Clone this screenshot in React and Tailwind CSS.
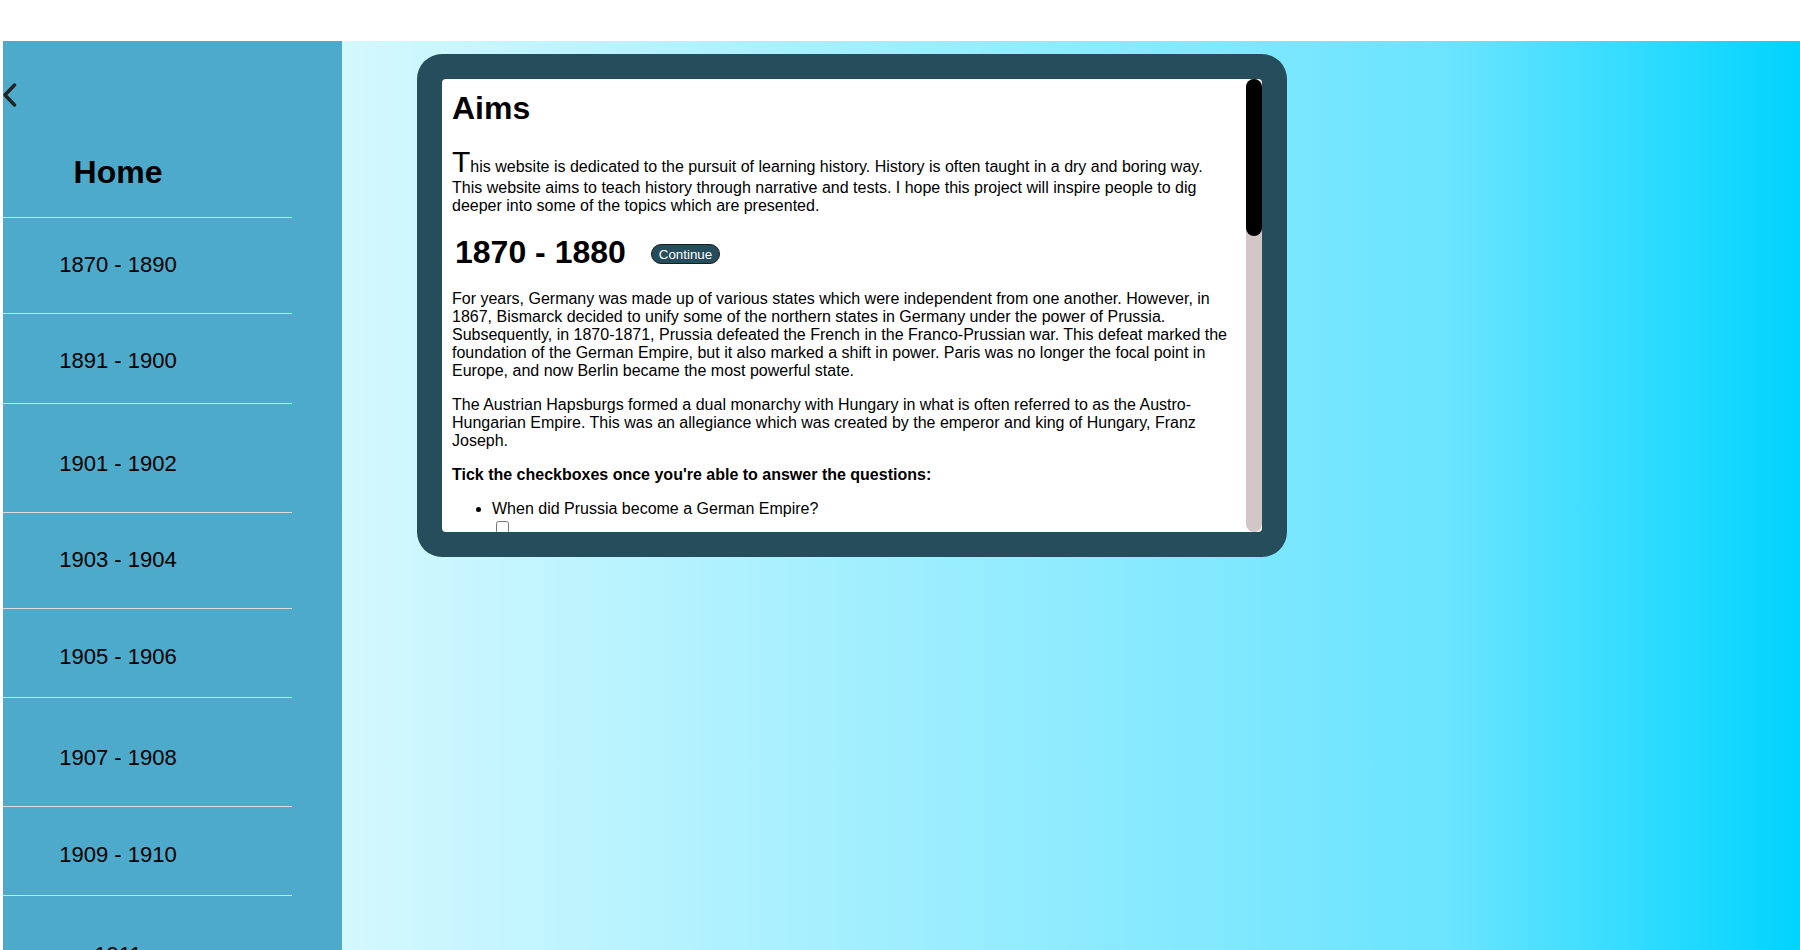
import React from 'react';

// sidebar entries, heights include the divider line under each one
const periods = [
    { label: '1870 - 1890', h: 'h-[96px] pb-[2px]' },
    { label: '1891 - 1900', h: 'h-[90px] pt-[5px]' },
    { label: '1901 - 1902', h: 'h-[109px] pt-[11px]' },
    { label: '1903 - 1904', h: 'h-[96px] pb-[2px]' },
    { label: '1905 - 1906', h: 'h-[89px] pt-[7px]' },
    { label: '1907 - 1908', h: 'h-[109px] pt-[11px]' },
    { label: '1909 - 1910', h: 'h-[89px] pt-[7px]' },
    { label: '1911', h: 'h-[118px]' },
];

const questions1870 = [
    'When did Prussia become a German Empire?',
    'Who decided to unify the northern states of Germany?',
    'Which war did Prussia win in 1870-1871?',
    'Which city became the most powerful state in Europe?',
    'What is the dual monarchy of Austria and Hungary often referred to as?',
];

const questions1881 = [
    'Which countries signed the Triple Alliance?',
    'Who became the Kaiser of Germany in 1888?',
    'What was Weltpolitik?',
];

const Sidebar = () => {
    return (
        <aside className="w-[339px] shrink-0 overflow-hidden bg-[#4eaacb]">
            <div className="h-[177px] w-[289px] border-b border-[#dcdcdc]">
                <div className="pt-[42px]">
                    <svg width="14" height="24" viewBox="0 0 14 24" aria-label="collapse menu">
                        <polyline points="11.5,2 2,12 11.5,22" fill="none" stroke="#222" strokeWidth="3.4" strokeLinecap="round" strokeLinejoin="round" />
                    </svg>
                </div>
                <div className="mt-[47px] w-[230px] text-center text-[32px] font-bold text-black">Home</div>
            </div>
            <ul>
                {periods.map((p, index) => (
                    <li key={index}
                        tabIndex="0"
                        className={`flex w-[289px] items-center border-b border-[#dcdcdc] ${p.h}`}>
                        <span className="w-[230px] text-center text-[22px] text-black">{p.label}</span>
                    </li>
                ))}
            </ul>
        </aside>
    );
};

const Questions = ({ items }) => (
    <ul className="mb-[16px] list-disc pl-[40px]">
        {items.map((q, index) => (
            <li key={index}>
                {q}
                <br />
                <input type="checkbox" className="mt-[3px] mr-[3px] mb-[3px] ml-[4px] h-[13px] w-[13px] align-middle" />
            </li>
        ))}
    </ul>
);

const SectionTitle = ({ title }) => (
    <div className="mb-[19px] flex items-center">
        <h2 className="ml-[3px] text-[32px] font-bold">{title}</h2>
        <button className="mt-[3px] ml-[25px] h-[20px] rounded-full border border-[#1c1c1c] bg-[#264d5b] px-[7px] text-[13.33px] text-white">
            Continue
        </button>
    </div>
);

const Card = () => {
    return (
        <div className="h-[503px] w-[870px] rounded-[25px] bg-[#264d5b] p-[25px]">
            <div className="flex h-full overflow-hidden rounded-[4px] bg-white">
                <div className="flex-1 overflow-hidden pt-[11px] pr-[10px] pl-[10px] text-[16px] text-black">
                    <h1 className="mb-[18px] text-[32px] font-bold">Aims</h1>
                    <p className="mb-[19px]">
                        <span className="text-[30px]">T</span>his website is dedicated to the pursuit of learning history. History is often taught in a dry and boring way. This website aims to teach history through narrative and tests. I hope this project will inspire people to dig deeper into some of the topics which are presented.
                    </p>

                    <SectionTitle title="1870 - 1880" />
                    <p className="mb-[16px]">
                        For years, Germany was made up of various states which were independent from one another. However, in 1867, Bismarck decided to unify some of the northern states in Germany under the power of Prussia. Subsequently, in 1870-1871, Prussia defeated the French in the Franco-Prussian war. This defeat marked the foundation of the German Empire, but it also marked a shift in power. Paris was no longer the focal point in Europe, and now Berlin became the most powerful state.
                    </p>
                    <p className="mb-[16px]">
                        The Austrian Hapsburgs formed a dual monarchy with Hungary in what is often referred to as the Austro-Hungarian Empire. This was an allegiance which was created by the emperor and king of Hungary, Franz Joseph.
                    </p>
                    <p className="mb-[16px] font-bold">Tick the checkboxes once you're able to answer the questions:</p>
                    <Questions items={questions1870} />

                    <SectionTitle title="1881 - 1890" />
                    <p className="mb-[16px]">
                        In 1882, Germany, Austria-Hungary and Italy signed the Triple Alliance. Each country promised to support the others if they were attacked by France or Russia. Bismarck hoped that this would keep France isolated in Europe.
                    </p>
                    <p className="mb-[16px] font-bold">Tick the checkboxes once you're able to answer the questions:</p>
                    <Questions items={questions1881} />
                </div>
                {/* scrollbar track + thumb */}
                <div className="w-[16px] shrink-0 rounded-[8px] bg-[#d3c6c6]">
                    <div className="h-[157px] rounded-[8px] bg-black" />
                </div>
            </div>
        </div>
    );
};

const App = () => {
    return (
        <div className="h-[950px] overflow-hidden bg-white font-['Liberation_Sans',Arial,sans-serif] leading-[normal]">
            <div className="h-[41px]" />
            <div className="flex h-[909px] pl-[3px]">
                <Sidebar />
                <main className="flex-1 bg-[linear-gradient(90deg,#d4f8fe_0%,#6ae4ff_76%,#00d4ff_100%)] pt-[13px] pl-[75px]">
                    <Card />
                </main>
            </div>
        </div>
    );
};

export default App;
